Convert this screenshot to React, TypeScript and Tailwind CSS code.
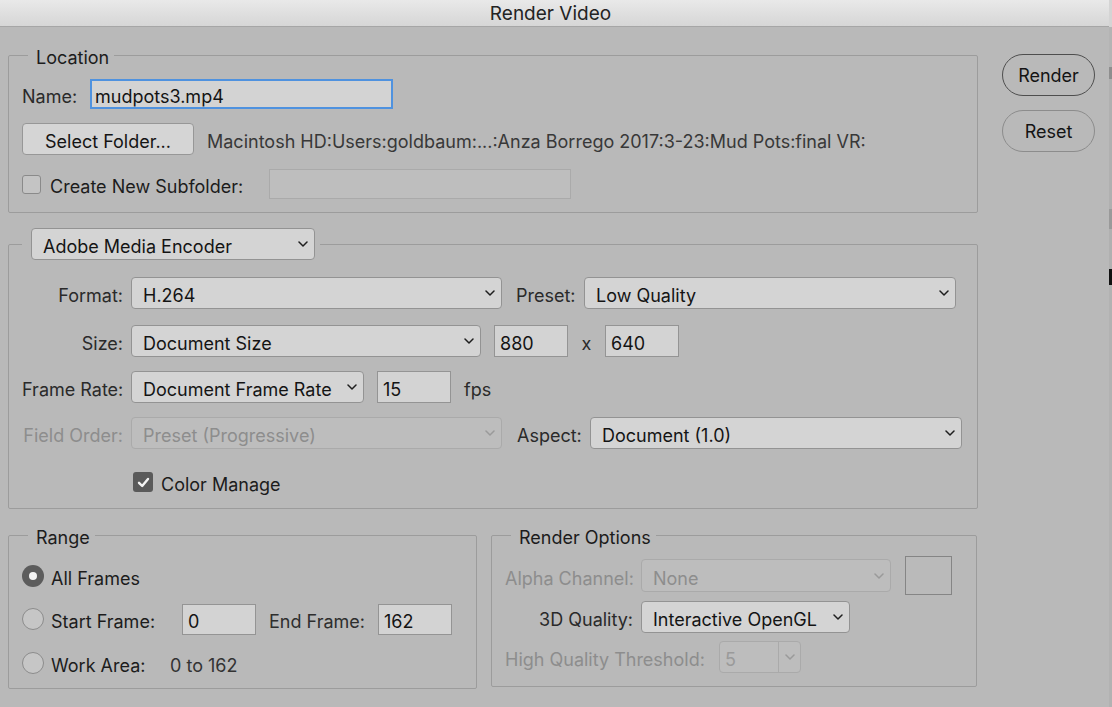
import React from "react";

const TX = "pt-[5px]";

function Chevron({ color = "#1e1e1e" }: { color?: string }) {
  return (
    <svg width="10" height="6" viewBox="0 0 10 6" className="shrink-0">
      <path d="M1 1l4 4 4-4" fill="none" stroke={color} strokeWidth="1.5" strokeLinecap="round" strokeLinejoin="round" />
    </svg>
  );
}

function Select({ text, className, disabled }: { text: string; className: string; disabled?: boolean }) {
  return (
    <div
      className={
        "flex items-center justify-between rounded-[4px] border pl-[11px] pr-[6px] shrink-0 " +
        (disabled
          ? "border-[#aaaaaa] bg-[#bdbdbd] text-[#8d8d8d] "
          : "border-[#939393] bg-[#d4d4d4] text-[#141414] ") +
        className
      }
    >
      <span className={"whitespace-nowrap " + TX}>{text}</span>
      <Chevron color={disabled ? "#9a9a9a" : "#1e1e1e"} />
    </div>
  );
}

function Input({ value, className }: { value: string; className: string }) {
  return (
    <div className={"flex items-center border border-[#949494] bg-[#d3d3d3] pl-[5px] text-[#141414] shrink-0 " + className}>
      <span className={TX}>{value}</span>
    </div>
  );
}

function Radio({ checked }: { checked?: boolean }) {
  return checked ? (
    <div className="flex h-[22px] w-[22px] shrink-0 items-center justify-center rounded-full bg-[#5c5c5c]">
      <div className="h-[8px] w-[8px] rounded-full bg-[#f2f2f2]" />
    </div>
  ) : (
    <div className="h-[22px] w-[22px] shrink-0 rounded-full border border-[#8c8c8c] bg-[#c6c6c6]" />
  );
}

export default function App() {
  return (
    <div className="flex h-[707px] w-[1112px] overflow-hidden bg-[#b9b9b9] font-[Inter,sans-serif] text-[18px] text-[#1c1c1c]">
      <div className="flex w-[1109px] flex-col">
        {/* Title bar */}
        <div className="flex h-[27px] shrink-0 items-center justify-center border-b border-[#a6a6a6] bg-gradient-to-b from-[#e9e9e9] to-[#d6d6d6] pr-[8px] text-[19px] text-[#232323]">
          <span className="pt-[2px]">Render Video</span>
        </div>

        <div className="flex">
          {/* Left column */}
          <div className="ml-[8px] flex w-[970px] flex-col pt-[16px]">
            {/* Location */}
            <fieldset className="w-[970px] rounded-[2px] border border-[#9c9c9c]">
              <legend className="ml-[19px] h-[24px] pl-[8px] pr-[5px] leading-[24px]">
                <span className="block pt-[3px]">Location</span>
              </legend>
              <div className="pl-[13px] pt-[12px] pb-[13px]">
                <div className="flex h-[30px] items-center">
                  <span className={"w-[68px] text-[#2a2a2a] " + TX}>Name:</span>
                  <div className="flex h-[30px] w-[303px] items-center border-2 border-[#4f92df] bg-[#d3d3d3] pl-[3px] text-[#141414]">
                    <span className={TX}>mudpots3.mp4</span>
                  </div>
                </div>
                <div className="mt-[14px] flex h-[32px] items-center">
                  <div className="flex h-[32px] w-[172px] items-center justify-center rounded-[4px] border border-[#979797] bg-[#d5d5d5] text-[#141414]">
                    <span className={TX}>Select Folder...</span>
                  </div>
                  <span className={"ml-[13px] whitespace-nowrap text-[#383838] " + TX}>
                    Macintosh HD:Users:goldbaum:...:Anza Borrego 2017:3-23:Mud Pots:final VR:
                  </span>
                </div>
                <div className="mt-[14px] flex h-[30px] items-center">
                  <div className="h-[19px] w-[19px] shrink-0 rounded-[3px] border border-[#8a8a8a] bg-[#c4c4c4]" />
                  <span className={"ml-[9px] w-[219px] whitespace-nowrap " + TX}>Create New Subfolder:</span>
                  <div className="h-[30px] w-[302px] border border-[#aaaaaa] bg-[#bebebe]" />
                </div>
              </div>
            </fieldset>

            {/* Encoder */}
            <fieldset className="mt-[15px] w-[970px] rounded-[2px] border border-[#9c9c9c]">
              <legend className="ml-[13px] pl-[9px] pr-[5px]">
                <Select text="Adobe Media Encoder" className="h-[32px] w-[284px]" />
              </legend>
              <div className="pl-[13px] pt-[17px] pb-[10px]">
                <div className="flex h-[32px] items-center">
                  <span className={"mr-[8px] w-[101px] text-right text-[#2a2a2a] " + TX}>Format:</span>
                  <Select text="H.264" className="h-[32px] w-[371px]" />
                  <span className={"ml-[14px] w-[68px] text-[#2a2a2a] " + TX}>Preset:</span>
                  <Select text="Low Quality" className="h-[32px] w-[372px]" />
                </div>
                <div className="mt-[16px] flex h-[32px] items-center">
                  <span className={"mr-[8px] w-[101px] text-right text-[#2a2a2a] " + TX}>Size:</span>
                  <Select text="Document Size" className="h-[32px] w-[350px]" />
                  <Input value="880" className="ml-[13px] h-[32px] w-[74px]" />
                  <span className={"w-[37px] text-center text-[#2a2a2a] " + TX}>x</span>
                  <Input value="640" className="h-[32px] w-[74px]" />
                </div>
                <div className="mt-[14px] flex h-[32px] items-center">
                  <span className={"mr-[8px] w-[101px] whitespace-nowrap text-right text-[#2a2a2a] " + TX}>Frame Rate:</span>
                  <Select text="Document Frame Rate" className="h-[32px] w-[233px]" />
                  <Input value="15" className="ml-[13px] h-[32px] w-[74px]" />
                  <span className={"ml-[13px] text-[#2a2a2a] " + TX}>fps</span>
                </div>
                <div className="mt-[14px] flex h-[32px] items-center">
                  <span className={"mr-[8px] w-[101px] whitespace-nowrap text-right text-[#8d8d8d] " + TX}>Field Order:</span>
                  <Select text="Preset (Progressive)" disabled className="h-[32px] w-[371px]" />
                  <span className={"ml-[15px] w-[73px] text-[#2a2a2a] " + TX}>Aspect:</span>
                  <Select text="Document (1.0)" className="h-[32px] w-[372px]" />
                </div>
                <div className="mt-[17px] flex h-[32px] items-center pl-[111px]">
                  <div className="flex h-[20px] w-[20px] items-center justify-center rounded-[3px] bg-[#5a5a5a]">
                    <svg width="13" height="11" viewBox="0 0 13 11">
                      <path d="M2 5.8l3.2 3.2L11 2" fill="none" stroke="#f4f4f4" strokeWidth="2.4" strokeLinecap="round" strokeLinejoin="round" />
                    </svg>
                  </div>
                  <span className={"ml-[8px] " + TX}>Color Manage</span>
                </div>
              </div>
            </fieldset>

            {/* Bottom row */}
            <div className="mt-[14px] flex items-start gap-[14px]">
              <fieldset className="w-[469px] rounded-[2px] border border-[#9c9c9c]">
                <legend className="ml-[19px] h-[24px] pl-[8px] pr-[5px] leading-[24px]">
                  <span className="block pt-[3px]">Range</span>
                </legend>
                <div className="pl-[13px] pt-[13px] pb-[9px]">
                  <div className="flex h-[32px] items-center">
                    <Radio checked />
                    <span className={"ml-[7px] " + TX}>All Frames</span>
                  </div>
                  <div className="mt-[11px] flex h-[32px] items-center">
                    <Radio />
                    <span className={"ml-[7px] w-[131px] whitespace-nowrap " + TX}>Start Frame:</span>
                    <Input value="0" className="h-[31px] w-[74px]" />
                    <span className={"ml-[13px] w-[109px] whitespace-nowrap text-[#2e2e2e] " + TX}>End Frame:</span>
                    <Input value="162" className="h-[31px] w-[74px]" />
                  </div>
                  <div className="mt-[12px] flex h-[32px] items-center">
                    <Radio />
                    <span className={"ml-[7px] w-[119px] whitespace-nowrap " + TX}>Work Area:</span>
                    <span className={"text-[#333333] " + TX}>0 to 162</span>
                  </div>
                </div>
              </fieldset>

              <fieldset className="w-[486px] rounded-[2px] border border-[#9c9c9c]">
                <legend className="ml-[19px] h-[24px] pl-[8px] pr-[5px] leading-[24px]">
                  <span className="block pt-[3px]">Render Options</span>
                </legend>
                <div className="pl-[13px] pt-[12px] pb-[13px]">
                  <div className="flex h-[33px] items-center">
                    <span className={"mr-[8px] w-[128px] whitespace-nowrap text-right text-[#8d8d8d] " + TX}>Alpha Channel:</span>
                    <Select text="None" disabled className="h-[33px] w-[250px]" />
                    <div className="my-[-3px] ml-[14px] h-[39px] w-[47px] border-[1.5px] border-[#858585] bg-[#bababa]" />
                  </div>
                  <div className="mt-[9px] flex h-[32px] items-center">
                    <span className={"mr-[8px] w-[128px] whitespace-nowrap text-right text-[#2a2a2a] " + TX}>3D Quality:</span>
                    <Select text="Interactive OpenGL" className="h-[32px] w-[209px]" />
                  </div>
                  <div className="mt-[8px] flex h-[32px] items-center">
                    <span className={"w-[214px] whitespace-nowrap text-[#8d8d8d] " + TX}>High Quality Threshold:</span>
                    <div className="flex h-[32px] w-[82px] rounded-[4px] border border-[#aaaaaa] bg-[#bdbdbd] text-[#9a9a9a]">
                      <div className="flex w-[59px] items-center border-r border-[#aaaaaa] pl-[5px]">
                        <span className={TX}>5</span>
                      </div>
                      <div className="flex flex-1 items-center justify-center">
                        <Chevron color="#9a9a9a" />
                      </div>
                    </div>
                  </div>
                </div>
              </fieldset>
            </div>
          </div>

          {/* Right buttons */}
          <div className="ml-[24px] flex flex-col pt-[27px]">
            <div className="flex h-[42px] w-[93px] items-center justify-center rounded-full border-[1.5px] border-[#4e4e4e] text-[#141414]">
              <span>Render</span>
            </div>
            <div className="mt-[14px] flex h-[42px] w-[93px] items-center justify-center rounded-full border-[1.5px] border-[#8c8c8c] text-[#141414]">
              <span>Reset</span>
            </div>
          </div>
        </div>
      </div>

      {/* Right edge strip (background behind window) */}
      <div className="flex w-[3px] flex-col">
        <div className="h-[27px] bg-[#d4d4d4]" />
        <div className="h-[40px] bg-[#b4b4b4]" />
        <div className="h-[12px] bg-[#8e8e8e]" />
        <div className="h-[130px] bg-[#b0b0b0]" />
        <div className="h-[20px] bg-[#9a9a9a]" />
        <div className="h-[40px] bg-[#b0b0b0]" />
        <div className="h-[16px] bg-[#111111]" />
        <div className="flex-1 bg-[#b2b2b2]" />
      </div>
    </div>
  );
}
